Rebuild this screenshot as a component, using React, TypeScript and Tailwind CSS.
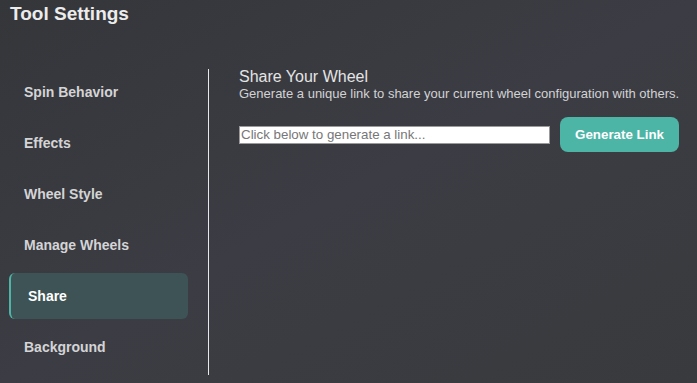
import React, { useState } from "react";

const tabs = ["Spin Behavior", "Effects", "Wheel Style", "Manage Wheels", "Share", "Background"];

const App: React.FC = () => {
  const [active, setActive] = useState<string>("Share");
  const [link] = useState<string>("");

  return (
    <div className="w-[697px] h-[383px] overflow-hidden bg-gradient-to-br from-[#35363a] via-[#3c3d44] to-[#393a3d] font-['Liberation_Sans',Arial,sans-serif] text-[#e6e6e6]">
      <h1 className="px-[10px] pt-[3px] text-[19px] leading-[22px] font-bold text-[#ececec]">Tool Settings</h1>

      <div className="flex mt-[44px]">
        <nav className="ml-[9px] w-[200px] pr-[20px] pb-[5px] border-r border-[#e8e8e8] flex flex-col gap-[5px]">
          {tabs.map((tab) => {
            const isActive = tab === active;
            return (
              <button
                key={tab}
                onClick={() => setActive(tab)}
                className={
                  isActive
                    ? "h-[46px] text-left rounded-[6px] border-l-2 border-[#4fb3a5] bg-[#3d5355] pl-[17px] text-[14px] font-bold text-white"
                    : "h-[46px] text-left rounded-[6px] pl-[15px] text-[14px] font-bold text-[#d4d4d6]"
                }
              >
                {tab}
              </button>
            );
          })}
        </nav>

        <section className="pl-[30px]">
          <h2 className="text-[16px] leading-[18px] text-[#e4e4e4] -mt-[1px]">Share Your Wheel</h2>
          <p className="text-[13px] leading-[15px] text-[#d2d2d4]">
            Generate a unique link to share your current wheel configuration with others.
          </p>
          <div className="flex items-center gap-[10px] mt-[16px]">
            <input
              readOnly
              value={link}
              placeholder="Click below to generate a link..."
              className="w-[311px] h-[18px] bg-white border border-[#9a9a9a] px-[1px] text-[13.33px] text-[#333] placeholder:text-[#777] outline-none"
            />
            <button className="w-[119px] h-[35px] rounded-[8px] bg-[#4db5a6] text-[13.33px] font-bold text-white">
              Generate Link
            </button>
          </div>
        </section>
      </div>
    </div>
  );
};

export default App;
